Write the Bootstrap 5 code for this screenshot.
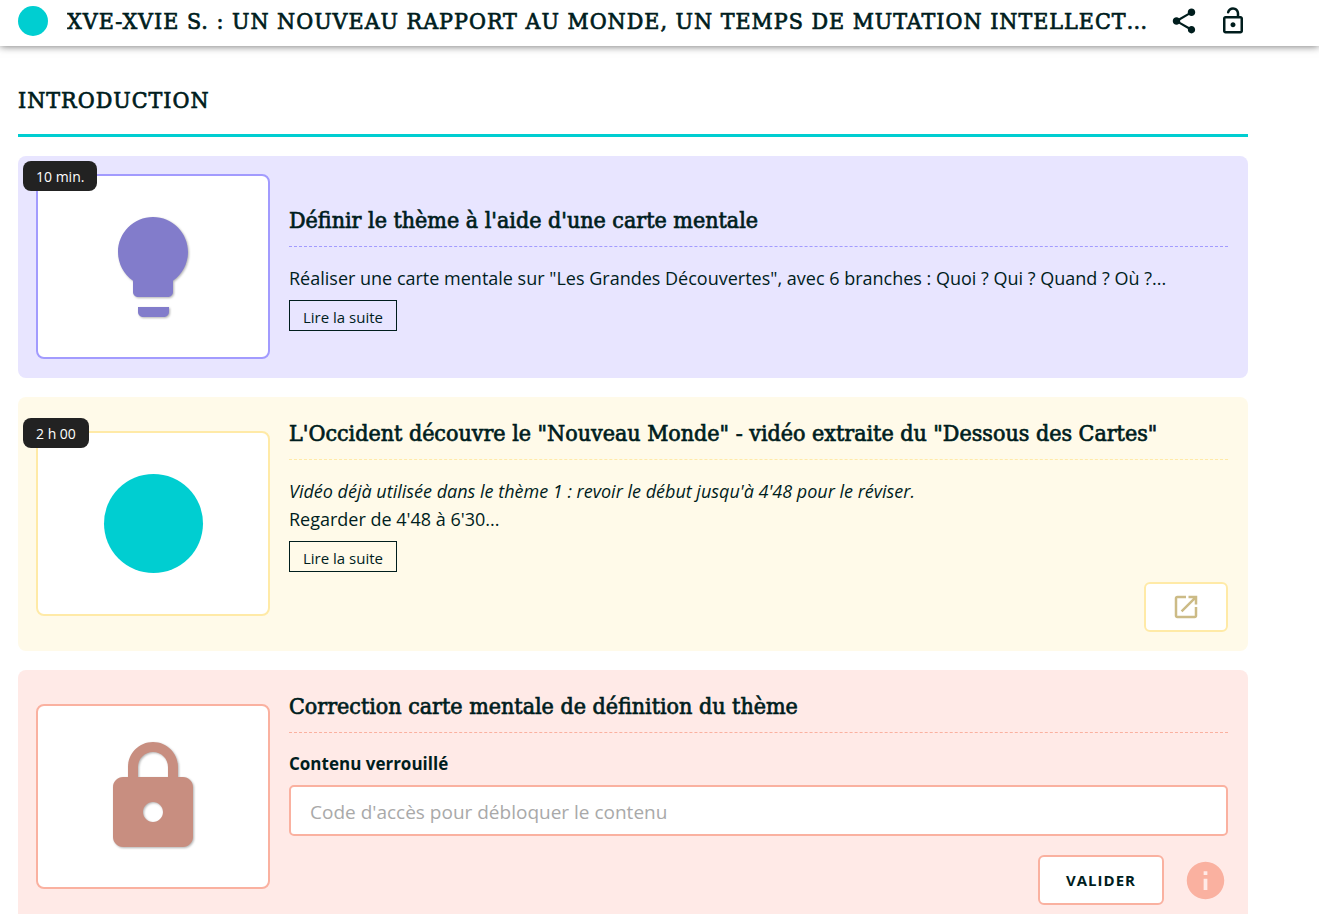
<!DOCTYPE html>
<html lang="fr">
<head>
<meta charset="utf-8">
<meta name="viewport" content="width=device-width, initial-scale=1">
<title>XVe-XVIe s. : un nouveau rapport au monde</title>
<link href="https://cdn.jsdelivr.net/npm/bootstrap@5.3.0/dist/css/bootstrap.min.css" rel="stylesheet">
<style>
  :root { --ink: #001d1d; --brand: #00ced1; --gap: 19px; }
  body { font-family: "Segoe UI", "Open Sans", "Noto Sans", sans-serif; font-size: 18px; line-height: 28px; color: var(--ink); }
  .gutter { padding-left: 18px; padding-right: 71px; }
  .gap-std { gap: var(--gap); }
  .topbar { height: 46px; padding-bottom: 4px; background: #fff; box-shadow: 0 0 8px rgba(0, 0, 0, .6); }
  .slab { font-family: "Roboto Slab", "DejaVu Serif Condensed", "DejaVu Serif", serif; font-weight: 500; font-size: 23px; line-height: 36px; margin: 0; -webkit-text-stroke: .03em currentColor; }
  .caps { text-transform: uppercase; letter-spacing: 1px; }
  .dot { display: block; border-radius: 50%; background: var(--brand); }
  .dot-sm { width: 30px; height: 30px; }
  .dot-lg { width: 99px; height: 99px; }
  .icon-btn { padding: 0; border: 0; background: none; color: var(--ink); line-height: 0; }
  svg { display: block; fill: currentColor; }
  .section-title { padding: 36px 0 16px; border-bottom: 3px solid var(--brand); }
  .activity { padding: 18px 20px 19px 18px; border-radius: 8px; background: var(--bg); }
  .violet { --bg: #e8e5ff; --line: #a29bfe; --icon: #827ccb; }
  .yellow { --bg: #fffae9; --line: #ffeaa7; --icon: #ccbb86; }
  .coral { --bg: #ffeae7; --line: #fab1a0; --icon: #c88e80; }
  .thumb { width: 234px; height: 185px; border: 2px solid var(--line); border-radius: 8px; background: #fff; color: var(--icon); }
  .thumb svg { filter: drop-shadow(1px 1px 1px rgba(0, 0, 0, .3)); }
  .duration { top: -15px; left: -15px; padding: 2px 13px 0; border-radius: 8px; background: #222; color: #fff; font-size: 14px; line-height: 28px; }
  .activity-title { padding-bottom: 8px; margin-bottom: 17px; border-bottom: 1px dashed var(--line); }
  .more { display: block; margin: 8px 0 0; padding: 4px 13px 0; border: 1px solid var(--ink); background: none; color: var(--ink); font-size: 15px; line-height: 25px; }
  .action { border: 2px solid var(--line); border-radius: 6px; background: #fff; height: 50px; }
  .action:hover { border-color: var(--icon); }
  .open-link { width: 84px; margin-top: 10px; color: var(--icon); }
  .code-label { font-size: 17px; font-weight: 700; }
  .code-input { height: 51px; margin: 7px 0 19px; padding: 2px 19px 0; border: 2px solid var(--line); border-radius: 5px; font-size: 19px; color: var(--ink); }
  .code-input::placeholder { color: #a9a9a9; }
  .validate { width: 126px; font-size: 15px; font-weight: 700; letter-spacing: 1px; color: var(--ink); }
  .info { color: var(--line); }
</style>
</head>
<body>
<header class="topbar gutter gap-std d-flex align-items-center sticky-top">
  <span class="dot dot-sm flex-shrink-0"></span>
  <h1 class="slab caps text-truncate flex-grow-1">XVe-XVIe s. : un nouveau rapport au monde, un temps de mutation intellect…</h1>
  <button type="button" class="icon-btn" aria-label="Partager">
    <svg width="30" height="30" viewBox="0 0 24 24"><path d="M18 16.08c-.76 0-1.44.3-1.96.77L8.91 12.7c.05-.23.09-.46.09-.7s-.04-.47-.09-.7l7.05-4.11c.54.5 1.25.81 2.04.81 1.66 0 3-1.34 3-3s-1.34-3-3-3-3 1.34-3 3c0 .24.04.47.09.7L8.04 9.81C7.5 9.31 6.79 9 6 9c-1.66 0-3 1.34-3 3s1.34 3 3 3c.79 0 1.5-.31 2.04-.81l7.12 4.16c-.05.21-.08.43-.08.65 0 1.61 1.31 2.92 2.92 2.92s2.92-1.31 2.92-2.92-1.31-2.92-2.92-2.92z"/></svg>
  </button>
  <button type="button" class="icon-btn" aria-label="Déverrouiller">
    <svg width="30" height="30" viewBox="0 0 24 24"><path fill-rule="evenodd" d="M18 8h-1V6c0-2.76-2.24-5-5-5-2.28 0-4.27 1.54-4.84 3.75-.14.54.18 1.08.72 1.22.53.14 1.08-.18 1.22-.72C9.44 3.93 10.63 3 12 3c1.65 0 3 1.35 3 3v2H6c-1.1 0-2 .9-2 2v10c0 1.1.9 2 2 2h12c1.1 0 2-.9 2-2V10c0-1.1-.9-2-2-2zm0 12H6V10h12v10zm-6-3c1.1 0 2-.9 2-2s-.9-2-2-2-2 .9-2 2 .9 2 2 2z"/></svg>
  </button>
</header>

<main class="gutter gap-std d-flex flex-column">
  <h2 class="slab caps section-title">Introduction</h2>

  <article class="activity violet gap-std d-flex align-items-center">
    <div class="thumb position-relative flex-shrink-0 d-flex align-items-center justify-content-center">
      <span class="duration position-absolute text-nowrap">10 min.</span>
      <svg width="120" height="120" viewBox="0 0 24 24"><path d="M9 21c0 .55.45 1 1 1h4.200c.55 0 1-.45 1-1v-1H9v1zM12 2C8.140 2 5 5.140 5 9c0 2.380 1.190 4.470 3 5.740V17c0 .55.45 1 1 1h6c.55 0 1-.45 1-1v-2.260c1.810-1.270 3-3.360 3-5.740 0-3.860-3.140-7-7-7z"/></svg>
    </div>
    <div class="flex-grow-1">
      <h3 class="slab activity-title">Définir le thème à l'aide d'une carte mentale</h3>
      <p class="mb-0">Réaliser une carte mentale sur "Les Grandes Découvertes", avec 6 branches : Quoi ? Qui ? Quand ? Où ?...</p>
      <button type="button" class="more">Lire la suite</button>
    </div>
  </article>

  <article class="activity yellow gap-std d-flex align-items-center">
    <div class="thumb position-relative flex-shrink-0 d-flex align-items-center justify-content-center">
      <span class="duration position-absolute text-nowrap">2 h 00</span>
      <span class="dot dot-lg"></span>
    </div>
    <div class="flex-grow-1">
      <h3 class="slab activity-title">L'Occident découvre le "Nouveau Monde" - vidéo extraite du "Dessous des Cartes"</h3>
      <p class="mb-0"><em>Vidéo déjà utilisée dans le thème 1 : revoir le début jusqu'à 4'48 pour le réviser.</em><br>Regarder de 4'48 à 6'30...</p>
      <button type="button" class="more">Lire la suite</button>
      <a href="#" class="action open-link d-flex align-items-center justify-content-center ms-auto" aria-label="Ouvrir le lien">
        <svg width="30" height="30" viewBox="0 0 24 24"><path d="M19 19H5V5h7V3H5c-1.110 0-2 .9-2 2v14c0 1.100.89 2 2 2h14c1.100 0 2-.9 2-2v-7h-2v7zM14 3v2h3.590l-9.830 9.830 1.410 1.410L19 6.410V10h2V3h-7z"/></svg>
      </a>
    </div>
  </article>

  <article class="activity coral gap-std d-flex align-items-center">
    <div class="thumb flex-shrink-0 d-flex align-items-center justify-content-center">
      <svg width="120" height="120" viewBox="0 0 24 24"><path fill-rule="evenodd" d="M18 8h-1V6c0-2.760-2.240-5-5-5S7 3.240 7 6v2H6c-1.100 0-2 .9-2 2v10c0 1.100.9 2 2 2h12c1.100 0 2-.9 2-2V10c0-1.100-.9-2-2-2zM9 6c0-1.660 1.340-3 3-3s3 1.340 3 3v2H9V6zm3 11c-1.100 0-2-.9-2-2s.9-2 2-2 2 .9 2 2-.9 2-2 2z"/></svg>
    </div>
    <form class="flex-grow-1">
      <h3 class="slab activity-title">Correction carte mentale de définition du thème</h3>
      <label for="code" class="code-label d-block">Contenu verrouillé</label>
      <input id="code" type="text" class="code-input d-block w-100" placeholder="Code d'accès pour débloquer le contenu">
      <div class="d-flex gap-std align-items-center justify-content-end">
        <button type="submit" class="action validate">VALIDER</button>
        <button type="button" class="icon-btn" aria-label="Informations">
          <svg class="info" width="45" height="45" viewBox="0 0 24 24"><path fill-rule="evenodd" d="M12 2C6.480 2 2 6.480 2 12s4.480 10 10 10 10-4.480 10-10S17.520 2 12 2zm1 15h-2v-6h2v6zm0-8h-2V7h2v2z"/></svg>
        </button>
      </div>
    </form>
  </article>
</main>
<script src="https://cdn.jsdelivr.net/npm/bootstrap@5.3.0/dist/js/bootstrap.bundle.min.js"></script>
</body>
</html>
